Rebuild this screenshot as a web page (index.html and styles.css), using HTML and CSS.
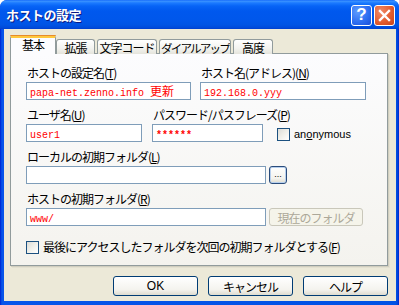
FILE: index.html
```html
<!DOCTYPE html>
<html lang="ja">
<head>
<meta charset="utf-8">
<title>ホストの設定</title>
<link rel="stylesheet" href="styles.css">
</head>
<body>
<div class="window">
  <div class="titlebar">
    <span class="title">ホストの設定</span>
    <div class="tb-buttons">
      <span class="tb tb-help">?</span>
      <span class="tb tb-close"><svg width="13" height="13" viewBox="0 0 13 13"><path d="M2 2 L11 11 M11 2 L2 11" stroke="#fff" stroke-width="2.4" stroke-linecap="square"/></svg></span>
    </div>
  </div>
  <div class="client">
    <div class="tabs">
      <div class="tab active">基本</div>
      <div class="tab t2">拡張</div>
      <div class="tab t3">文字コード</div>
      <div class="tab t4">ダイアルアップ</div>
      <div class="tab t5">高度</div>
    </div>
    <div class="panel">
      <div class="row">
        <div class="group w165">
          <div class="label">ホストの設定名(<u>T</u>)</div>
          <div class="field"><span class="mono">papa-net.zenno.info </span><span class="cjk">更新</span></div>
        </div>
        <div class="group w166 ml9">
          <div class="label">ホスト名(アドレス)(<u>N</u>)</div>
          <div class="field"><span class="mono">192.168.0.yyy</span></div>
        </div>
      </div>
      <div class="row">
        <div class="group w116">
          <div class="label">ユーザ名(<u>U</u>)</div>
          <div class="field"><span class="mono">user1</span></div>
        </div>
        <div class="group w111 ml10">
          <div class="label">パスワード/パスフレーズ(<u>P</u>)</div>
          <div class="field"><span class="mono stars">******</span></div>
        </div>
        <div class="check anon">
          <span class="box"></span>
          <span class="check-label latin">an<u>o</u>nymous</span>
        </div>
      </div>
      <div class="row">
        <div class="group w240">
          <div class="label">ローカルの初期フォルダ(<u>L</u>)</div>
          <div class="field"></div>
        </div>
        <div class="btn small dots">...</div>
      </div>
      <div class="row">
        <div class="group w240">
          <div class="label">ホストの初期フォルダ(<u>R</u>)</div>
          <div class="field"><span class="mono">www/</span></div>
        </div>
        <div class="btn small disabled">現在のフォルダ</div>
      </div>
      <div class="check last">
        <span class="box"></span>
        <span class="check-label">最後にアクセスしたフォルダを次回の初期フォルダとする(<u>F</u>)</span>
      </div>
    </div>
    <div class="buttons">
      <div class="btn push">OK</div>
      <div class="btn push">キャンセル</div>
      <div class="btn push">ヘルプ</div>
    </div>
  </div>
</div>
</body>
</html>
```

FILE: styles.css
```css
* { box-sizing: border-box; }
html, body { margin: 0; padding: 0; }
body {
  width: 399px;
  height: 305px;
  overflow: hidden;
  background: #ffffff;
  font-family: "Noto Sans CJK JP", "Liberation Sans", sans-serif;
  font-size: 12px;
  color: #000;
}
.window {
  width: 399px;
  height: 305px;
  display: flex;
  flex-direction: column;
  background: linear-gradient(90deg, #0019CF 0, #0043E0 1px, #0855EA 2px, #0052E5 396px, #0040D8 398px, #001ECB 399px);
  border-radius: 7px 7px 0 0;
}
.titlebar {
  height: 29px;
  flex: none;
  display: flex;
  align-items: center;
  justify-content: space-between;
  padding: 0 4px 0 6px;
  border-radius: 7px 7px 0 0;
  background: linear-gradient(#0A5EF9 0, #3D95FF 1px, #1B7AFF 3px, #0764F6 6px, #0058EE 11px, #0057EB 20px, #0054E4 25px, #0049D9 28px, #003DCB 29px);
}
.title {
  color: #fff;
  font-weight: bold;
  font-size: 13px;
  letter-spacing: -0.5px;
  text-shadow: 1px 1px 0 #0A1883;
  margin-top: -1px;
}
.tb-buttons { display: flex; gap: 2px; margin-top: 1px; }
.tb {
  width: 21px;
  height: 21px;
  border: 1px solid #fff;
  border-radius: 3px;
  display: flex;
  align-items: center;
  justify-content: center;
  color: #fff;
  font-family: "Liberation Sans", sans-serif;
  font-weight: bold;
  font-size: 17px;
}
.tb-help {
  background: radial-gradient(circle at 30% 30%, #5D9CFF 0, #2C6CF0 60%, #1C4FD8 100%);
}
.tb-close {
  background: radial-gradient(circle at 30% 30%, #F08A68 0, #E25A2C 60%, #C7431A 100%);
}
.client {
  flex: 1;
  margin: 0 3px 4px 4px;
  background: #ECE9D8;
  padding: 6px 0 0 6px;
  display: flex;
  flex-direction: column;
}
.tabs {
  display: flex;
  align-items: flex-end;
  height: 19px;
  margin-bottom: -1px;
  position: relative;
  z-index: 1;
}
.tab {
  height: 15px;
  border: 1px solid #919B9C;
  border-bottom: none;
  border-radius: 3px 3px 0 0;
  background: linear-gradient(#FFFFFF, #F3F3EF 60%, #E5E4DC);
  display: flex;
  align-items: center;
  justify-content: center;
  font-size: 12px;
  letter-spacing: -1px;
  line-height: 14px;
  padding-top: 1px;
  white-space: nowrap;
  overflow: hidden;
}
.tab.active {
  width: 46px;
  height: 19px;
  background: #FCFCFE;
  border-top: 3px solid #FFC83C;
  position: relative;
  align-items: flex-start;
  padding-top: 0;
  overflow: visible;
}
.tab.active::before {
  content: "";
  position: absolute;
  left: -1px;
  right: -1px;
  top: -3px;
  height: 1px;
  background: #E68B2C;
  border-radius: 3px 3px 0 0;
}
.t2 { width: 39px; }
.t3 { width: 60px; margin-left: 2px; }
.t4 { width: 72px; margin-left: 2px; letter-spacing: -1.8px; font-size: 11.5px; }
.t5 { width: 40px; margin-left: 2px; }
.panel {
  width: 378px;
  height: 213px;
  border: 1px solid #919B9C;
  background: linear-gradient(#FCFCFE, #F4F3EE);
  box-shadow: 1px 1px 0 #D0CEBF, 2px 2px 0 #E3E0D0;
  padding: 12px 0 0 15px;
  display: flex;
  flex-direction: column;
  gap: 8px;
}
.row { display: flex; align-items: flex-end; }
.group { display: flex; flex-direction: column; gap: 2px; }
.w165 { width: 165px; }
.w166 { width: 166px; }
.w116 { width: 116px; }
.w111 { width: 111px; }
.w240 { width: 240px; }
.ml9 { margin-left: 9px; }
.ml10 { margin-left: 10px; }
.label {
  height: 14px;
  line-height: 14px;
  padding-left: 1px;
  letter-spacing: -1px;
  white-space: nowrap;
}
.label u, .check-label u { text-decoration-thickness: 1px; text-underline-offset: 1px; }
.field {
  height: 18px;
  background: #fff;
  border: 1px solid #7F9DB9;
  color: #FF0000;
  padding: 0 3px;
  line-height: 16px;
  white-space: nowrap;
  overflow: hidden;
}
.mono {
  font-family: "Liberation Mono", monospace;
  font-size: 10px;
  white-space: pre;
}
.stars { font-weight: bold; }
.cjk { font-size: 12px; }
.check { display: flex; align-items: center; }
.box {
  width: 13px;
  height: 13px;
  border: 1px solid #1C5180;
  background: linear-gradient(135deg, #DCDCD7 0, #F0F0EA 50%, #FFFFFF 100%);
  flex: none;
}
.check-label { margin-left: 4px; line-height: 14px; letter-spacing: -1px; white-space: nowrap; }
.latin { font-family: "Liberation Sans", sans-serif; font-size: 11px; letter-spacing: 0; }
.anon { margin-left: 14px; margin-bottom: 1px; }
.check.last { margin-top: 6px; margin-left: 0; }
.btn {
  display: flex;
  align-items: center;
  justify-content: center;
  border: 1px solid #003C74;
  border-radius: 3px;
  background: linear-gradient(#FFFFFF, #F4F3EE 70%, #DEDCD0);
  white-space: nowrap;
  letter-spacing: -1px;
}
.btn.small { height: 18px; margin-left: 3px; }
.dots {
  width: 18px;
  border-color: #2A4C7C;
  box-shadow: inset 0 0 0 1px #B8D0EE;
  font-family: "Liberation Sans", sans-serif;
  font-size: 9px;
  line-height: 1;
  letter-spacing: 0;
  padding-bottom: 2px;
}
.disabled {
  width: 94px;
  border-color: #C9C7BA;
  background: #F5F4EA;
  color: #ACA899;
}
.buttons {
  display: flex;
  justify-content: flex-end;
  gap: 10px;
  margin-top: 10px;
  padding-right: 8px;
}
.push {
  width: 85px;
  height: 20px;
  font-size: 12px;
}
.push:first-child { font-family: "Liberation Sans", sans-serif; font-size: 12px; letter-spacing: 0; }
```
